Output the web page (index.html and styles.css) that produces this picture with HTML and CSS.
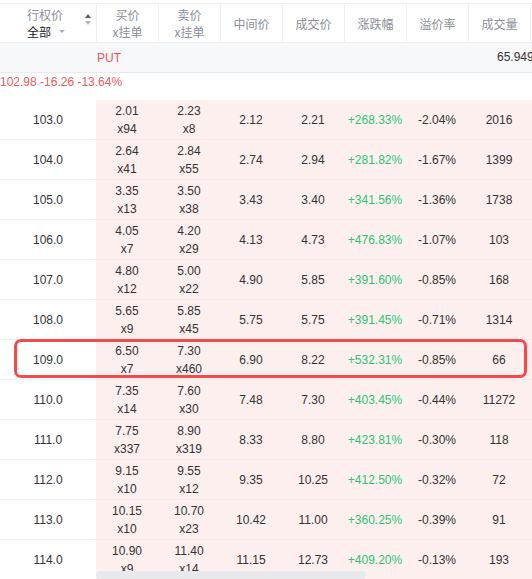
FILE: index.html
```html
<!DOCTYPE html>
<html>
<head>
<meta charset="utf-8">
<link rel="stylesheet" href="styles.css">
</head>
<body>
<div class="board">
  <div class="head">
    <div class="hcell strike-h">
      <div class="strike-title">
        <span class="h1">行权价</span>
        <span class="h2">全部<span class="caret"></span></span>
      </div>
      <span class="sort"><span class="up"></span><span class="down"></span></span>
    </div>
    <div class="hcell"><span class="h1">买价</span><span class="h1">x挂单</span></div>
    <div class="hcell"><span class="h1">卖价</span><span class="h1">x挂单</span></div>
    <div class="hcell"><span class="h1">中间价</span></div>
    <div class="hcell"><span class="h1">成交价</span></div>
    <div class="hcell"><span class="h1">涨跌幅</span></div>
    <div class="hcell"><span class="h1">溢价率</span></div>
    <div class="hcell"><span class="h1">成交量</span></div>
    <div class="hcell"></div>
  </div>
  <div class="putrow">
    <span class="put">PUT</span>
    <span class="putval">65.949</span>
  </div>
  <div class="inforow">102.98 -16.26 -13.64%</div>
  <div id="rows"></div>
  <div class="scrollbar"></div>
</div>
<script src="app.js"></script>
</body>
</html>
```
FILE: app.js
```js
const data = [
  ["103.0","2.01","x94","2.23","x8","2.12","2.21","+268.33%","-2.04%","2016"],
  ["104.0","2.64","x41","2.84","x55","2.74","2.94","+281.82%","-1.67%","1399"],
  ["105.0","3.35","x13","3.50","x38","3.43","3.40","+341.56%","-1.36%","1738"],
  ["106.0","4.05","x7","4.20","x29","4.13","4.73","+476.83%","-1.07%","103"],
  ["107.0","4.80","x12","5.00","x22","4.90","5.85","+391.60%","-0.85%","168"],
  ["108.0","5.65","x9","5.85","x45","5.75","5.75","+391.45%","-0.71%","1314"],
  ["109.0","6.50","x7","7.30","x460","6.90","8.22","+532.31%","-0.85%","66"],
  ["110.0","7.35","x14","7.60","x30","7.48","7.30","+403.45%","-0.44%","11272"],
  ["111.0","7.75","x337","8.90","x319","8.33","8.80","+423.81%","-0.30%","118"],
  ["112.0","9.15","x10","9.55","x12","9.35","10.25","+412.50%","-0.32%","72"],
  ["113.0","10.15","x10","10.70","x23","10.42","11.00","+360.25%","-0.39%","91"],
  ["114.0","10.90","x9","11.40","x14","11.15","12.73","+409.20%","-0.13%","193"]
];
const wrap = document.getElementById("rows");
data.forEach(d => {
  const r = document.createElement("div");
  r.className = "row";
  r.innerHTML =
    `<div class="cell strike">${d[0]}</div>` +
    `<div class="cell pink two"><span>${d[1]}</span><span>${d[2]}</span></div>` +
    `<div class="cell pink two"><span>${d[3]}</span><span>${d[4]}</span></div>` +
    `<div class="cell pink">${d[5]}</div>` +
    `<div class="cell pink">${d[6]}</div>` +
    `<div class="cell pink green">${d[7]}</div>` +
    `<div class="cell pink">${d[8]}</div>` +
    `<div class="cell pink">${d[9]}</div>` +
    `<div class="cell pink"></div>` +
    (d[0] === "109.0" ? `<div class="mark"></div>` : "");
  wrap.appendChild(r);
});
```
FILE: styles.css
```css
* { box-sizing: border-box; }
html, body { margin: 0; padding: 0; }
body {
  width: 532px;
  height: 579px;
  overflow: hidden;
  background: #fff;
  font-family: "Liberation Sans", "Noto Sans CJK SC", sans-serif;
  font-size: 12px;
  color: #333;
}
.board {
  position: relative;
  padding-top: 3px;
  width: 532px;
  height: 579px;
  overflow: hidden;
}
.head {
  display: grid;
  grid-template-columns: 96px repeat(8, 62px);
  height: 40px;
  border-top: 1px solid #eeeff1;
  border-bottom: 1px solid #eeeff1;
}
.hcell {
  display: flex;
  flex-direction: column;
  align-items: center;
  justify-content: center;
  border-left: 1px solid #eeeff1;
  color: #8a8e98;
  font-family: "Noto Sans CJK SC", "Liberation Sans", sans-serif;
  line-height: 17px;
}
.strike-h {
  border-left: none;
  flex-direction: row;
  justify-content: flex-start;
  position: relative;
}
.strike-title {
  display: flex;
  flex-direction: column;
  align-items: flex-start;
  padding-left: 27px;
}
.h2 {
  color: #222;
  display: flex;
  align-items: center;
}
.caret {
  width: 0; height: 0;
  margin-left: 8px;
  border-left: 3px solid transparent;
  border-right: 3px solid transparent;
  border-top: 3px solid #a9adb5;
}
.sort {
  position: absolute;
  right: 5px;
  top: 10px;
  display: flex;
  flex-direction: column;
  gap: 3px;
}
.sort .up {
  width: 0; height: 0;
  border-left: 3.5px solid transparent;
  border-right: 3.5px solid transparent;
  border-bottom: 4px solid #555a63;
}
.sort .down {
  width: 0; height: 0;
  border-left: 3.5px solid transparent;
  border-right: 3.5px solid transparent;
  border-top: 4px solid #b5b9c0;
}
.putrow {
  position: relative;
  height: 30px;
  background: #f7f8fa;
  border-bottom: 1px solid #e9eaec;
  display: flex;
  align-items: center;
}
.put {
  margin-left: 97px;
  color: #f0525a;
  font-size: 12px;
}
.putval {
  position: absolute;
  left: 497px;
  top: 7px;
  white-space: nowrap;
  color: #333;
}
.inforow {
  height: 27px;
  padding-top: 1px;
  color: #f05a5a;
  line-height: 16px;
  white-space: nowrap;
}
.row {
  position: relative;
  display: grid;
  grid-template-columns: 96px repeat(8, 62px);
  height: 40px;
}
.cell {
  display: flex;
  align-items: center;
  justify-content: center;
  border-bottom: 1px solid #f1f1f3;
  color: #333;
  white-space: nowrap;
}
.pink {
  background: #fdefee;
  border-bottom: 1px solid #f8e9e9;
}
.two {
  flex-direction: column;
  line-height: 18px;
}
.green { color: #2cc47a; }
.mark {
  position: absolute;
  left: 14px;
  top: -1px;
  width: 513px;
  height: 39px;
  border: 3px solid #f24b4b;
  border-radius: 7px;
}
.scrollbar {
  position: absolute;
  left: 96px;
  top: 571px;
  width: 270px;
  height: 9px;
  border-radius: 5px;
  background: #e7e9ed;
}
```
